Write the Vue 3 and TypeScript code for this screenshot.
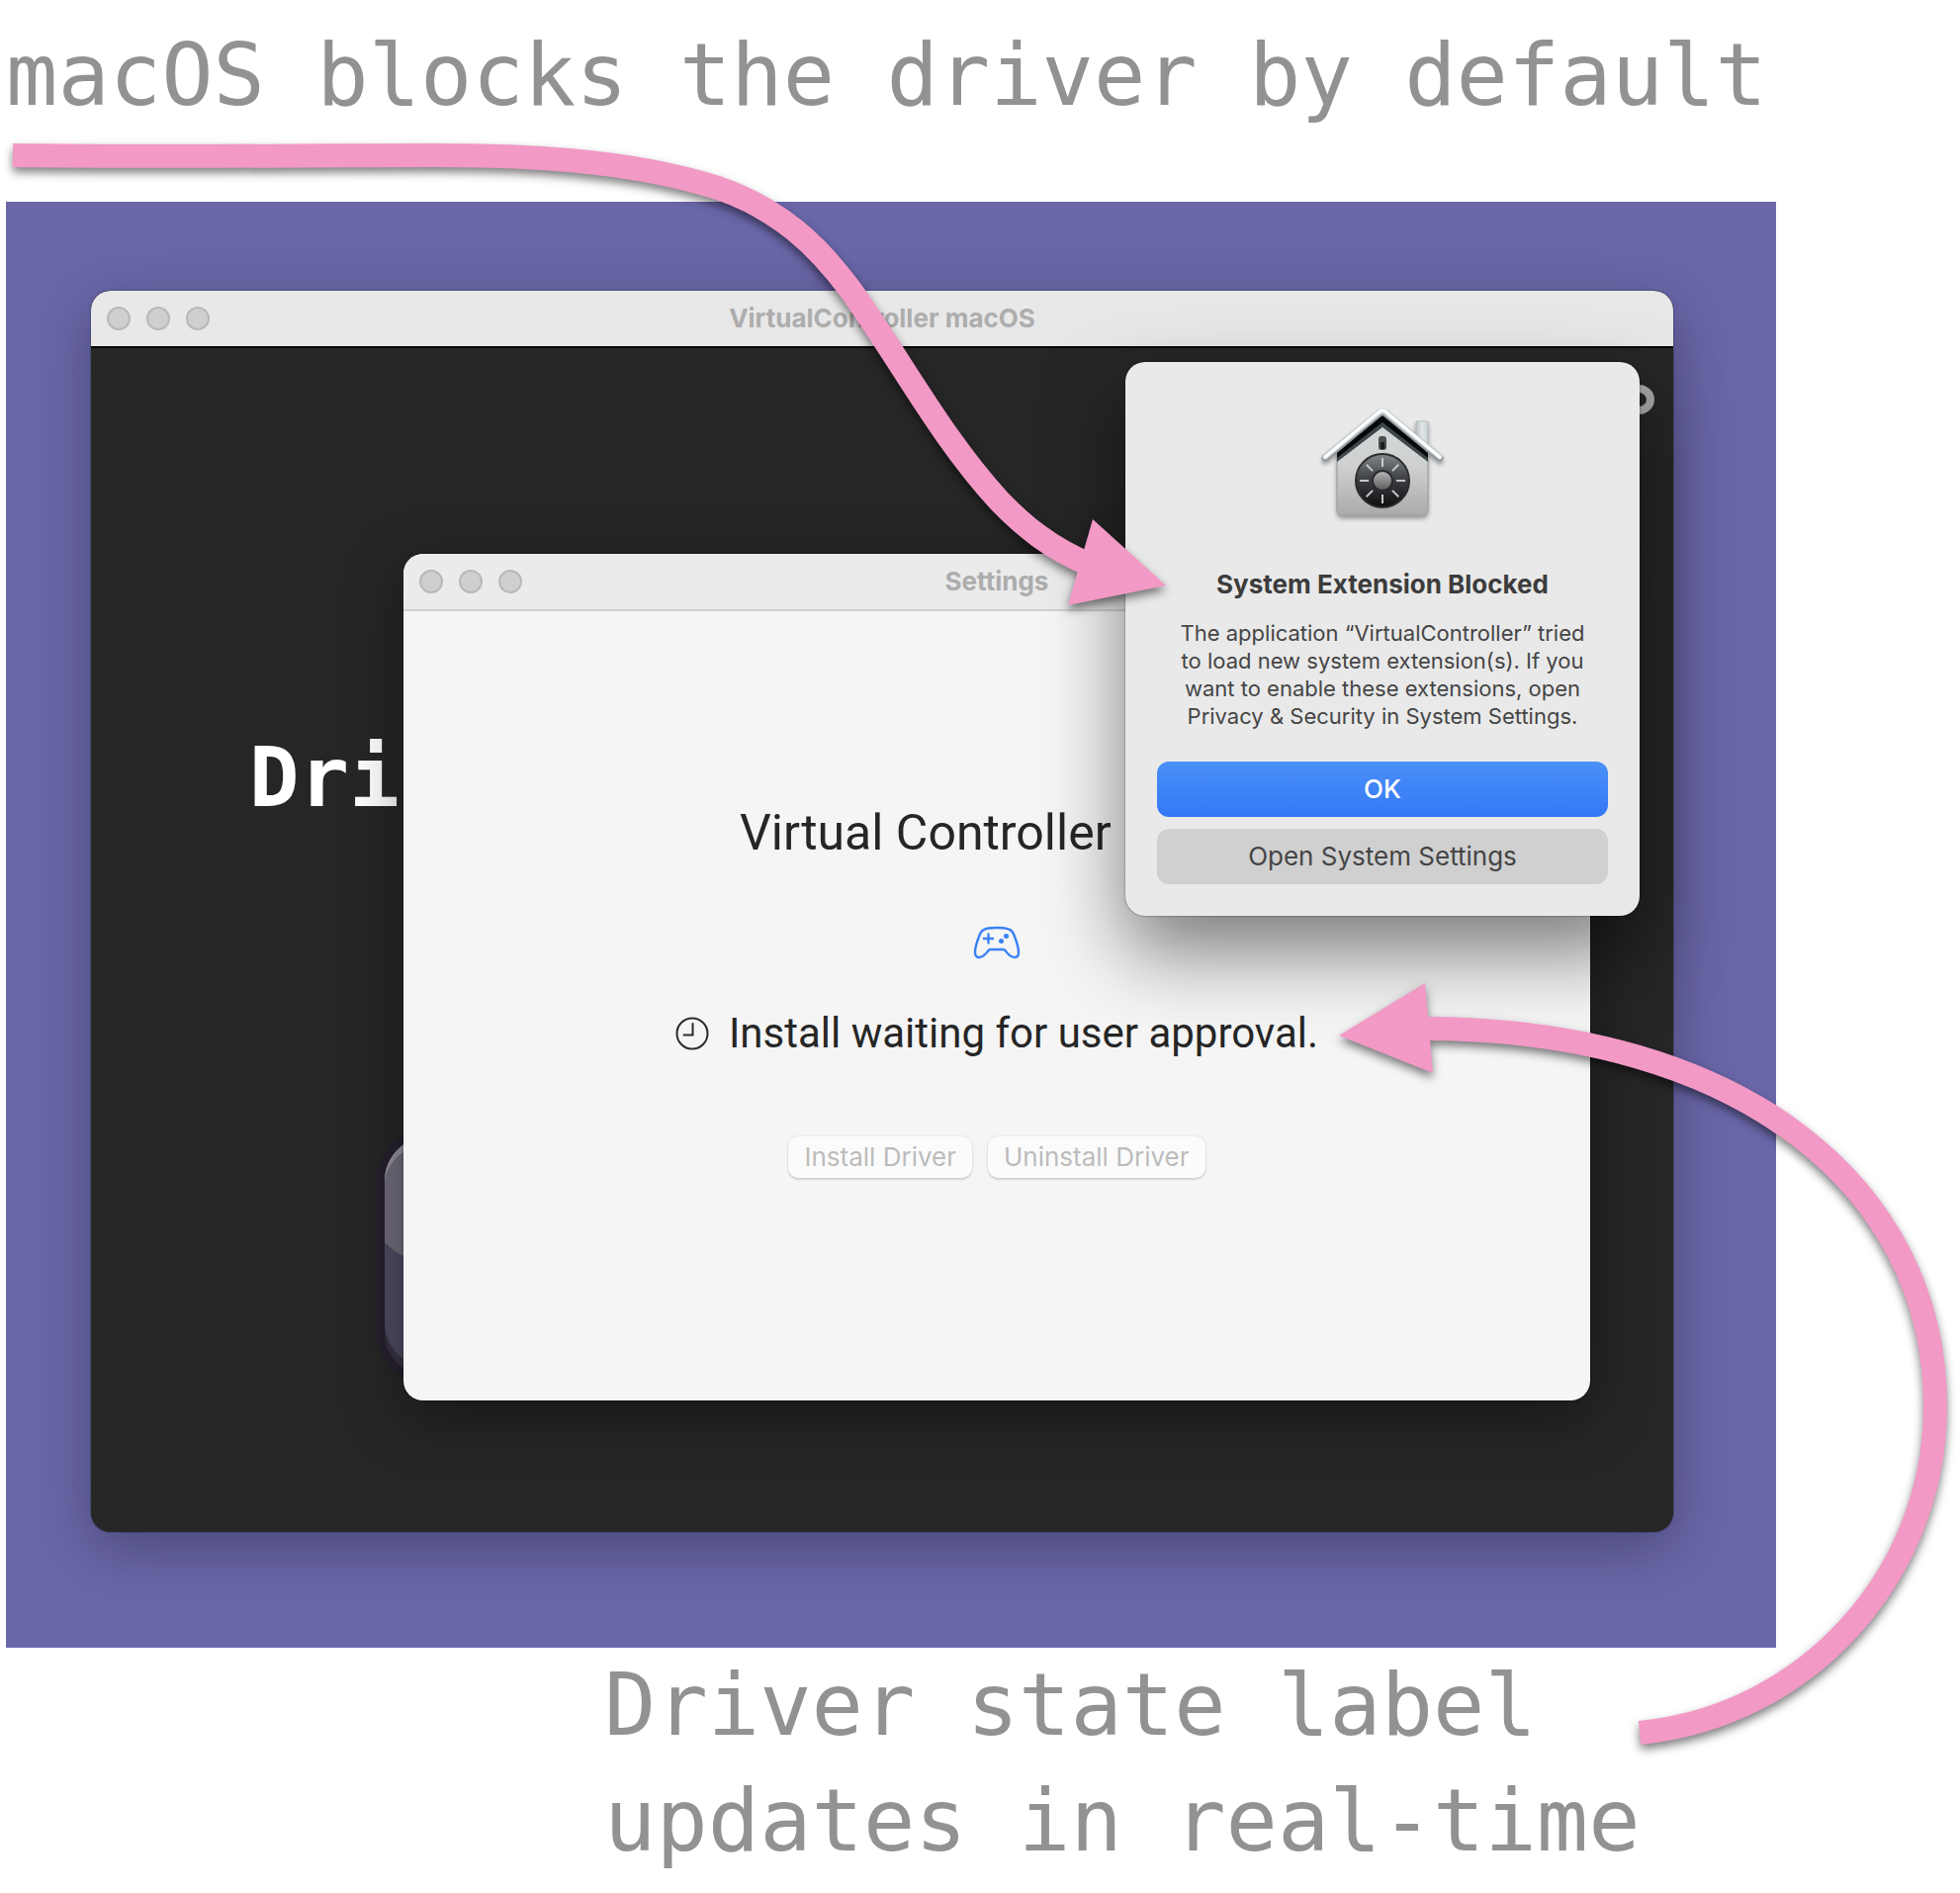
<script setup lang="ts">
import { ref } from 'vue'

const lights = ['Close', 'Minimise', 'Zoom']
const ticks = [0, 45, 90, 135, 180, 225, 270, 315]
const state = ref('Install waiting for user approval.')
</script>

<template>
  <main class="page">
    <h1 class="caption caption-top">macOS blocks the driver by default</h1>

    <section class="desktop">
      <div class="window app">
        <header class="titlebar">
          <div class="lights">
            <button v-for="l in lights" :key="l" class="light" type="button" :aria-label="l"></button>
          </div>
          <span class="title">VirtualController macOS</span>
        </header>
        <div class="stage">
          <span class="backdrop-text">Dri</span>
          <svg class="ring" viewBox="0 0 32 32" aria-hidden="true">
            <ellipse cx="15" cy="16" rx="12" ry="11" fill="none" stroke="#a9a9a9" stroke-width="8" />
          </svg>
          <svg class="pad" viewBox="0 0 120 260" aria-hidden="true">
            <rect x="1" y="1" width="200" height="258" rx="52" fill="#26212d" />
            <rect x="9" y="8" width="200" height="243" rx="45" fill="#373245" />
            <rect x="9" y="8" width="200" height="233" rx="45" fill="#504a61" />
            <path d="M9 53a45 45 0 0 1 45-45h60v126H54a60 60 0 0 1-45-19z" fill="#716c7b" />
            <path d="M9 53a45 45 0 0 1 45-45h60v8H54A46 42 0 0 0 9 53z" fill="#96929e" />
          </svg>

          <section class="window settings">
            <header class="titlebar">
              <div class="lights">
                <button v-for="l in lights" :key="l" class="light" type="button" :aria-label="l"></button>
              </div>
              <span class="title">Settings</span>
            </header>
            <div class="panel">
              <h2 class="product">Virtual Controller</h2>
              <svg class="gamepad" viewBox="0 0 50 34" fill="none" stroke="#3b82f7" stroke-width="2.400" stroke-linecap="round" stroke-linejoin="round" aria-hidden="true">
                <path d="M12 4C15 2 20 2 25 2s10 0 13 2c3 1 4 4 5 7 2 5 4 12 4 16 0 3-1 5-4 5-4 0-6-3-8-5-1-2-2-3-4-3H19c-2 0-3 1-4 3-2 2-4 5-8 5-3 0-4-2-4-5 0-4 2-11 4-16 1-3 2-6 5-7z" />
                <path d="M12 13h9M16.500 8.500v9" />
                <circle cx="34.500" cy="10.500" r="1.300" fill="#3b82f7" />
                <circle cx="29.500" cy="15.500" r="1.300" fill="#3b82f7" />
              </svg>
              <p class="status">
                <svg class="clock" viewBox="0 0 34 34" fill="none" stroke="#2b2b2b" stroke-width="2" stroke-linecap="round" aria-hidden="true">
                  <circle cx="17" cy="17" r="15.500" />
                  <path d="M17.500 7v11.500H8.500" />
                </svg>
                <span>{{ state }}</span>
              </p>
              <div class="actions">
                <button class="small" type="button" disabled>Install Driver</button>
                <button class="small" type="button" disabled>Uninstall Driver</button>
              </div>
            </div>
          </section>
        </div>
      </div>

      <div class="dialog" role="alertdialog" aria-labelledby="dlg-title">
        <svg class="house" viewBox="0 0 128 128" aria-hidden="true">
          <defs>
            <linearGradient id="wall" x1="0" y1="0" x2="0" y2="1">
              <stop offset="0" stop-color="#d3dadc" />
              <stop offset="0.500" stop-color="#cfd0d0" />
              <stop offset="1" stop-color="#adaba9" />
            </linearGradient>
            <linearGradient id="dial" x1="0" y1="0" x2="0" y2="1">
              <stop offset="0" stop-color="#85888b" />
              <stop offset="0.450" stop-color="#404245" />
              <stop offset="1" stop-color="#0e0e10" />
            </linearGradient>
            <linearGradient id="knob" x1="0" y1="0" x2="0" y2="1">
              <stop offset="0" stop-color="#b2b4b6" />
              <stop offset="1" stop-color="#5c5e60" />
            </linearGradient>
            <linearGradient id="flue" x1="0" y1="0" x2="1" y2="0">
              <stop offset="0" stop-color="#b9c0c3" />
              <stop offset="0.500" stop-color="#e2e8e9" />
              <stop offset="1" stop-color="#c9d0d2" />
            </linearGradient>
          </defs>
          <path d="M98 16h12v26L98 32z" fill="url(#flue)" stroke="#b5bcbe" stroke-width="1" />
          <path d="M18 48L64 9l46 39v57q0 6-6 6H24q-6 0-6-6z" fill="url(#wall)" stroke="#9b9b9b" stroke-width="1" />
          <path d="M18 48L64 9l46 39v9L64 22 18 57z" fill="#3e474b" />
          <path d="M18 48L64 9l46 39v5L64 17 18 53z" fill="#06090b" />
          <path d="M6 53L61 8q3-2 6 0l55 45" fill="none" stroke="#8e979c" stroke-width="7" stroke-linecap="round" stroke-linejoin="round" />
          <path d="M6 52L61 7q3-2 6 0l55 45" fill="none" stroke="#cfd6d9" stroke-width="5" stroke-linecap="round" stroke-linejoin="round" />
          <path d="M6 52L61 6q3-2 6 0l55 46" fill="none" stroke="#fcfefe" stroke-width="3" stroke-linecap="round" stroke-linejoin="round" />
          <rect x="60" y="31" width="8" height="14" rx="3" fill="#4c4e50" />
          <rect x="62" y="37" width="4" height="7" rx="1" fill="#1b1c1d" />
          <circle cx="64" cy="76" r="27" fill="url(#dial)" stroke="#2c2d2f" stroke-width="2" />
          <path v-for="t in ticks" :key="t" d="M64 53v9" :transform="`rotate(${t} 64 76)`" stroke="#c5c7c9" stroke-width="2" />
          <circle cx="64" cy="76" r="11" fill="#2a2b2d" />
          <circle cx="64" cy="76" r="9" fill="url(#knob)" />
        </svg>
        <h2 id="dlg-title" class="dialog-title">System Extension Blocked</h2>
        <p class="dialog-text">
          The application “VirtualController” tried<br />to load new system extension(s). If you<br />want to enable these extensions, open<br />Privacy &amp; Security in System Settings.
        </p>
        <div class="choices">
          <button class="choice primary" type="button">OK</button>
          <button class="choice" type="button">Open System Settings</button>
        </div>
      </div>
    </section>

    <p class="caption caption-bottom">Driver state label<br />updates in real-time</p>

    <svg class="arrows" viewBox="0 0 1982 1914" aria-hidden="true">
      <g class="arrow">
        <path class="shaft" d="M13 157C170 159 300 157 442 157C560 157 650 166 726 190C790 212 828 250 860 293C912 366 950 440 1010 506C1035 532 1062 554 1100 570" />
        <path class="head" d="M1105 525L1179 592L1080 612z" />
      </g>
      <g class="arrow">
        <path class="shaft" d="M1658 1752C1830 1735 1957 1590 1957 1422C1957 1200 1760 1040 1440 1040" />
        <path class="head" d="M1354 1047L1441 994L1449 1085z" />
      </g>
    </svg>
  </main>
</template>

<style>
body {
  margin: 0;
  background: #fff;
}
</style>

<style scoped>
.page {
  position: relative;
  padding: 18px 0 14px;
  font-family: Inter, "Liberation Sans", sans-serif;
  overflow: hidden;
}

h1, h2, p {
  margin: 0;
}

button {
  font-family: inherit;
  border: 0;
  padding: 0;
}

.caption {
  font-family: "DejaVu Sans Mono", "Liberation Mono", monospace;
  font-size: 87px;
  font-weight: 400;
  line-height: 117px;
  color: #929292;
  white-space: nowrap;
}

.caption-top {
  padding-left: 6px;
  margin-bottom: 69px;
}

.caption-bottom {
  padding-left: 611px;
}

.desktop {
  position: relative;
  margin: 0 186px 0 6px;
  padding: 90px 104px 117px 86px;
  background: #6a67a9;
  overflow: hidden;
}

.window {
  position: relative;
  border-radius: 20px;
}

.app {
  background: #262626;
  box-shadow: 0 0 2px rgba(0, 0, 0, 0.6), 0 16px 60px rgba(0, 0, 0, 0.3);
}

.titlebar {
  display: grid;
  grid-template-columns: 1fr auto 1fr;
  align-items: center;
  height: 56px;
  padding: 0 16px;
  border-radius: 20px 20px 0 0;
  background: #e8e8e8;
  border-bottom: 2px solid #060606;
}

.lights {
  display: flex;
  gap: 16px;
}

.light {
  width: 24px;
  height: 24px;
  border: 2px solid #b9b9b9;
  border-radius: 50%;
  background: #cfcfcf;
}

.title {
  font-size: 26px;
  font-weight: 700;
  line-height: 32px;
  color: #adadad;
}

.stage {
  position: relative;
  padding: 208px 84px 133px 316px;
}

.backdrop-text {
  position: absolute;
  left: 160px;
  top: 384px;
  font-family: "DejaVu Sans Mono", monospace;
  font-size: 84px;
  font-weight: 700;
  line-height: 100px;
  color: #fff;
}

.ring {
  position: absolute;
  right: 18px;
  top: 36px;
  width: 32px;
  height: 32px;
}

.pad {
  position: absolute;
  left: 288px;
  top: 789px;
  width: 120px;
  height: 260px;
}

.settings {
  background: #f5f5f5;
  box-shadow: 0 0 2px rgba(0, 0, 0, 0.6), 0 16px 60px rgba(0, 0, 0, 0.4);
}

.settings .titlebar {
  background: #ebebeb;
  border-color: #d2d2d2;
}

.panel {
  display: flex;
  flex-direction: column;
  align-items: center;
  padding: 192px 0 225px;
}

.product {
  align-self: flex-start;
  margin-left: 340px;
  font-family: Roboto, "Liberation Sans", sans-serif;
  font-size: 50px;
  font-weight: 400;
  line-height: 64px;
  color: #262626;
}

.gamepad {
  width: 50px;
  height: 34px;
  margin-top: 62px;
}

.status {
  display: flex;
  align-items: center;
  gap: 20px;
  margin-top: 47px;
  font-family: Roboto, "Liberation Sans", sans-serif;
  font-size: 42px;
  line-height: 56px;
  color: #262626;
}

.clock {
  width: 34px;
  height: 34px;
}

.actions {
  display: flex;
  gap: 16px;
  margin-top: 76px;
}

.small {
  height: 42px;
  padding: 0 16px;
  border-radius: 10px;
  background: #fbfbfb;
  box-shadow: 0 0 2px rgba(0, 0, 0, 0.15), 0 2px 2px rgba(0, 0, 0, 0.12);
  font-size: 26px;
  line-height: 40px;
  color: #bcbcbc;
}

.dialog {
  position: absolute;
  right: 138px;
  top: 162px;
  box-sizing: border-box;
  width: 520px;
  padding: 44px 32px 32px;
  display: flex;
  flex-direction: column;
  align-items: center;
  border-radius: 20px;
  background: #e9e9e9;
  box-shadow: 0 0 2px rgba(0, 0, 0, 0.6), 0 36px 80px rgba(0, 0, 0, 0.5);
}

.house {
  width: 128px;
  height: 128px;
  filter: drop-shadow(0 3px 2px rgba(0, 0, 0, 0.35));
}

.dialog-title {
  margin-top: 37px;
  font-size: 26px;
  font-weight: 700;
  line-height: 32px;
  color: #3c3c3c;
}

.dialog-text {
  margin-top: 19px;
  font-size: 22px;
  line-height: 28px;
  color: #454545;
  text-align: center;
  white-space: nowrap;
}

.choices {
  display: flex;
  flex-direction: column;
  gap: 12px;
  width: 100%;
  margin-top: 32px;
}

.choice {
  height: 56px;
  padding-bottom: 2px;
  border-radius: 12px;
  background: #d0d0d0;
  font-size: 26px;
  font-weight: 400;
  color: #454545;
}

.primary {
  background: linear-gradient(#4a90f7, #3478f6);
  color: #fff;
  font-weight: 500;
}

.arrows {
  position: absolute;
  left: 0;
  top: 0;
  width: 100%;
  pointer-events: none;
}

.arrow {
  filter: drop-shadow(0 5px 5px rgba(0, 0, 0, 0.5));
}

.shaft {
  fill: none;
  stroke: #f299c6;
  stroke-width: 24;
}

.head {
  fill: #f299c6;
}
</style>
